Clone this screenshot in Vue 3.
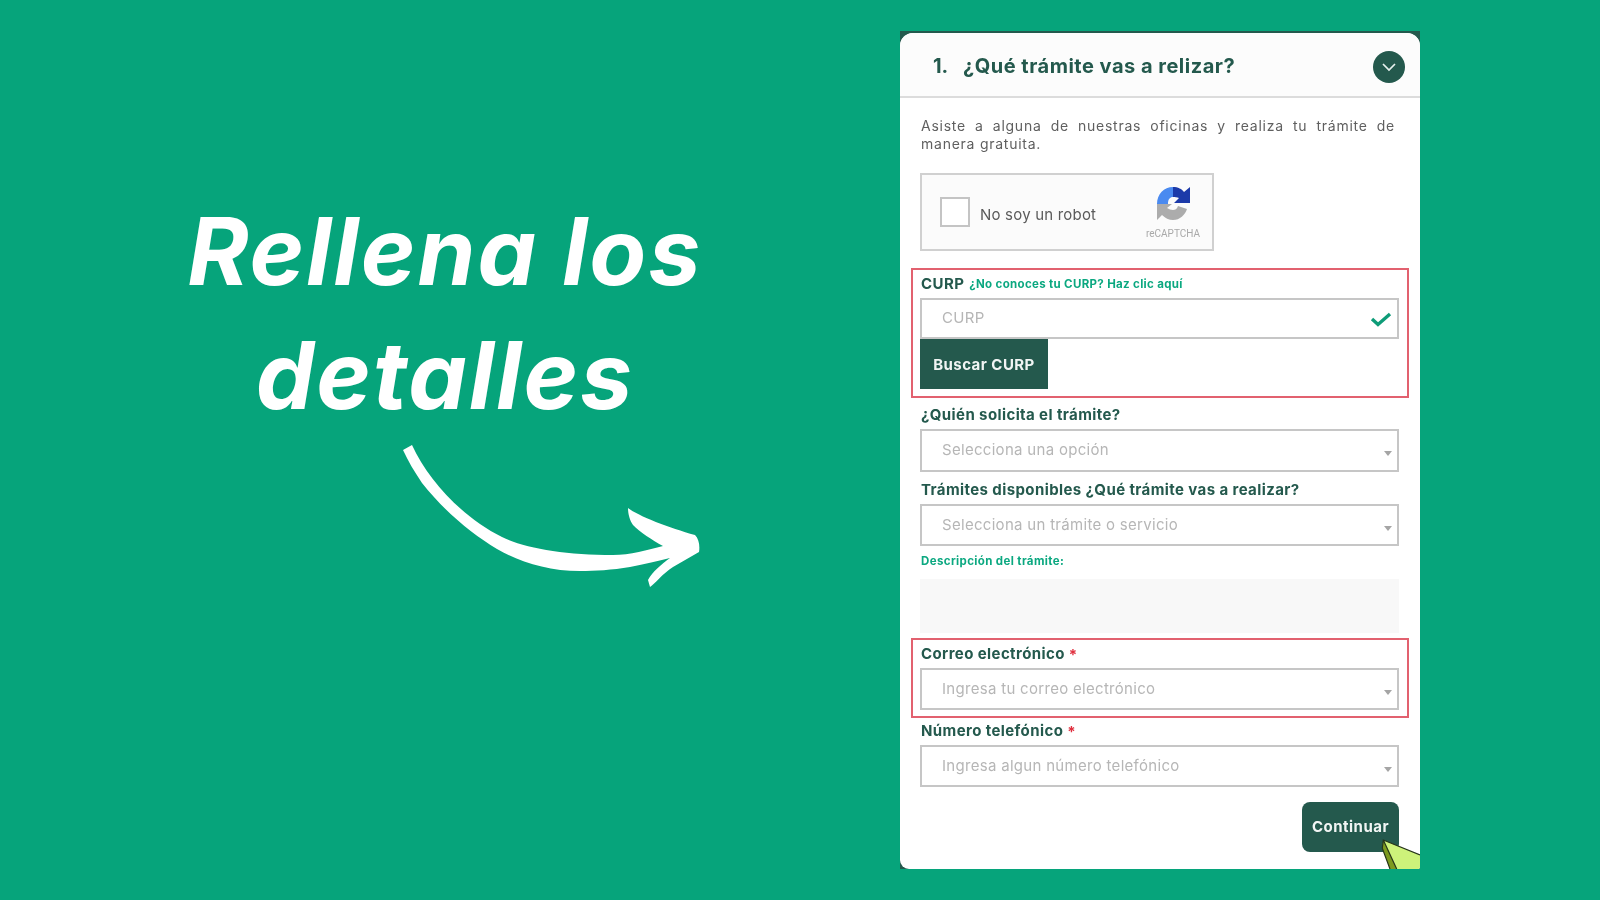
<script setup>
const fieldsA = [
  { label: '¿Quién solicita el trámite?', placeholder: 'Selecciona una opción', cls: 'f-a' },
  { label: 'Trámites disponibles ¿Qué trámite vas a realizar?', placeholder: 'Selecciona un trámite o servicio', cls: 'f-b' }
]
</script>

<template>
  <div class="page">
    <section class="hero">
      <h1 class="headline">Rellena los<br />detalles</h1>
      <svg class="arrow" width="320" height="160" viewBox="0 0 320 160">
        <path d="M13 14 L22 9 C38 44 72 81 112 101 C135 112 175 119 223 119 C240 119 258 114 273 110 C262 104 250 96 243 89 C240 85 238 78 238 72 C248 80 280 92 305 99 C309 103 310 110 309 116 L283 131 C272 138 265 148 260 151 L258 144 C262 136 272 128 280 122 C268 125 255 128 240 131 C222 134 205 135 190 135 C158 135 130 126 107 113 C82 98 55 76 32 47 C24 35 18 25 13 14 Z" fill="#fff" />
      </svg>
    </section>

    <main class="card">
      <div class="sheet">
        <header class="head">
          <span class="num">1.</span>
          <h2 class="title">¿Qué trámite vas a relizar?</h2>
          <span class="toggle">
            <svg width="16" height="10" viewBox="0 0 16 10"><path d="M2 2 L8 8 L14 2" fill="none" stroke="#e8f1ee" stroke-width="1.7" /></svg>
          </span>
        </header>

        <div class="body">
          <p class="intro">Asiste a alguna de nuestras oficinas y realiza tu trámite de manera gratuita.</p>

          <div class="captcha">
            <span class="box"></span>
            <span class="robot">No soy un robot</span>
            <span class="brand">
              <svg width="38" height="38" viewBox="0 0 38 38">
                <path d="M3 20 H14 C14 15 16 13 19 13 V3 C10 3 3 10 3 20 Z" fill="#4a8af0" />
                <path d="M19 3 C24 3 28 5 30 8 L36 3 V19 H20 L25 14 C23 13 21 13 19 13 Z" fill="#1c3aa9" />
                <path d="M3 20 V36 L8 31 C11 34 15 36 19 36 C26 36 31 31 33 25 L24 22 C23 25 21 26 19 26 C17 26 15 25 13 24 L18 20 Z" fill="#acacac" />
              </svg>
              <small>reCAPTCHA</small>
            </span>
          </div>

          <div class="flag flag-curp">
            <div class="label-row curp-row">
              <span class="label">CURP</span>
              <a class="hint">¿No conoces tu CURP? Haz clic aquí</a>
            </div>
            <div class="control">
              <span class="ph">CURP</span>
              <svg class="check" width="22" height="15" viewBox="0 0 22 15"><path d="M2 7 L8 12.5 L20 2" fill="none" stroke="#0e9c78" stroke-width="3.4" /></svg>
            </div>
            <button class="search">Buscar CURP</button>
          </div>

          <div v-for="f in fieldsA" :key="f.label" :class="['field', f.cls]">
            <div class="label-row"><span class="label">{{ f.label }}</span></div>
            <div class="control"><span class="ph">{{ f.placeholder }}</span><i class="caret"></i></div>
          </div>

          <div class="desc-label">Descripción del trámite:</div>
          <div class="desc"></div>

          <div class="flag flag-mail">
            <div class="label-row"><span class="label">Correo electrónico</span><b class="req">*</b></div>
            <div class="control"><span class="ph">Ingresa tu correo electrónico</span><i class="caret"></i></div>
          </div>

          <div class="field">
            <div class="label-row"><span class="label">Número telefónico</span><b class="req">*</b></div>
            <div class="control"><span class="ph">Ingresa algun número telefónico</span><i class="caret"></i></div>
          </div>

          <div class="actions"><button class="next">Continuar</button></div>
        </div>

        <svg class="pointer" width="40" height="32" viewBox="0 0 40 32">
          <path d="M3.3 3 L40 18 V32 H10 L2.3 11.3 Z" fill="#cdf27a" />
          <path d="M3.3 3 L2.3 11.3 L10 32 H16.7 Z" fill="#7c9a1f" />
          <path d="M2.3 11.3 L3.3 3 L40 18 M3.3 3 L16.7 32 M2.3 11.3 L10 32" fill="none" stroke="#26351a" stroke-width="1.2" />
        </svg>
      </div>
    </main>
  </div>
</template>

<style>
html, body { margin: 0; background: #06a47b; }
</style>

<style scoped>
.page {
  width: 1600px;
  height: 900px;
  background: #06a47b;
  display: flex;
  overflow: hidden;
  font-family: Inter, "Liberation Sans", sans-serif;
}
.hero { width: 900px; padding-top: 189px; box-sizing: border-box; }
.headline {
  margin: 0;
  width: 890px;
  text-align: center;
  color: #fff;
  font-size: 93px;
  line-height: 124px;
  letter-spacing: 2px;
  font-weight: 700;
  font-style: italic;
  font-family: Inter, sans-serif;
}
.arrow { display: block; margin: -1px 0 0 390px; }

.card {
  width: 520px;
  height: 838px;
  margin-top: 31px;
  padding-top: 2px;
  box-sizing: border-box;
  background: #24594d;
  filter: blur(0.35px);
}
.sheet {
  position: relative;
  height: 100%;
  background: #fff;
  border-radius: 13px 13px 2px 9px;
  overflow: hidden;
}
.head {
  height: 61px;
  box-sizing: content-box;
  display: flex;
  align-items: center;
  padding: 2px 15px 0 33px;
  background: #fcfcfc;
  border-bottom: 2px solid #dcdcdc;
  color: #24594d;
}
.num { width: 30px; font-size: 20px; font-weight: 700; }
.title { margin: 0; font-size: 20px; font-weight: 700; flex: 1; letter-spacing: 0.5px; }
.toggle {
  width: 32px;
  height: 32px;
  margin-top: 3px;
  border-radius: 50%;
  background: #24594d;
  display: flex;
  align-items: center;
  justify-content: center;
}
.body { padding: 19px 21px 0 20px; }
.intro {
  margin: 0;
  padding: 0 4px 0 1px;
  font-size: 14px;
  line-height: 17.5px;
  text-align: justify;
  color: #5f5f5f;
  letter-spacing: 0.75px;
}
.captcha {
  margin-top: 21px;
  width: 294px;
  height: 78px;
  box-sizing: border-box;
  border: 2px solid #d0d0d0;
  background: #fbfbfb;
  display: flex;
  align-items: center;
  padding-left: 18px;
}
.box {
  width: 30px;
  height: 30px;
  box-sizing: border-box;
  border: 2px solid #c4c4c4;
  background: #fff;
  margin-right: 10px;
}
.robot { font-size: 15px; color: #5a5a5a; width: 158px; letter-spacing: 0.2px; margin-top: 4px; }
.brand { display: flex; flex-direction: column; align-items: center; width: 70px; margin-top: -1px; }
.brand small { font-size: 10px; color: #a9a9a9; margin-top: 6px; font-family: Roboto, sans-serif; }

.flag {
  margin: 0 -10px 0 -9px;
  padding: 0 8px 0 7px;
  border: 2px solid #e2616f;
}
.flag-curp { margin-top: 17px; padding-bottom: 7px; }
.flag-mail { margin-top: 5px; padding-bottom: 6px; }
.flag-mail .label-row { height: 28px; }
.label-row { height: 27px; display: flex; align-items: center; gap: 5px; padding-left: 1px; }
.curp-row { height: 28px; }
.label { font-size: 15px; font-weight: 700; color: #24594d; letter-spacing: 0.4px; margin-bottom: 2px; }
.hint { font-size: 11.5px; font-weight: 700; color: #0ba880; letter-spacing: 0.33px; }
.req { color: #e0303f; font-size: 15px; margin-left: -1px; }
.control {
  position: relative;
  height: 42px;
  box-sizing: border-box;
  border: 2px solid #c6c6c6;
  background: #fff;
  display: flex;
  align-items: center;
  padding: 0 0 2px 20px;
}
.flag-curp .control { height: 41px; }
.ph { font-size: 15px; color: #b6b6b6; letter-spacing: 0.3px; }
.check { position: absolute; right: 5px; top: 12px; }
.caret {
  position: absolute;
  right: 5px;
  top: 20px;
  width: 0;
  height: 0;
  border-left: 4px solid transparent;
  border-right: 4px solid transparent;
  border-top: 5px solid #a5a5a5;
}
.search {
  display: block;
  width: 128px;
  height: 50px;
  border: 0;
  background: #24594d;
  color: #f1f5f4;
  font: 700 15px Inter, sans-serif;
  letter-spacing: 0.45px;
  padding: 0;
}
.field.f-a { margin-top: 4px; }
.field.f-a .label-row { height: 27px; }
.field.f-a .control { height: 43px; }
.field.f-b { margin-top: 4px; }
.field.f-b .label-row { height: 28px; }
.desc-label {
  margin-top: 7px;
  padding-left: 1px;
  height: 16px;
  line-height: 16px;
  font-size: 11.5px;
  font-weight: 700;
  color: #0ba880;
  letter-spacing: 0.38px;
}
.desc { margin-top: 10px; height: 54px; background: #f8f8f8; }
.actions { display: flex; justify-content: flex-end; margin-top: 15px; }
.next {
  width: 97px;
  height: 50px;
  border: 0;
  border-radius: 8px;
  background: #24594d;
  color: #f1f5f4;
  font: 700 15px Inter, sans-serif;
  letter-spacing: 0.5px;
  padding: 0 0 2px;
}
.pointer { position: absolute; right: 0; bottom: 0; }
</style>
